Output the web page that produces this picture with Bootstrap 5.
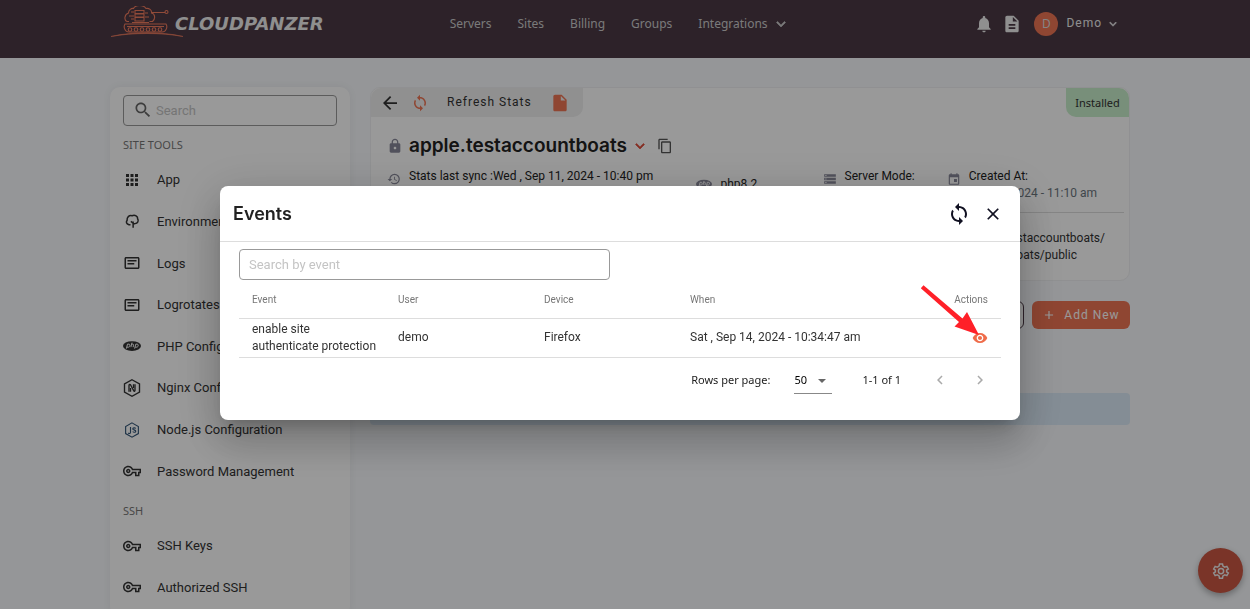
<!DOCTYPE html>
<html lang="en">
<head>
<meta charset="utf-8">
<meta name="viewport" content="width=device-width, initial-scale=1">
<title>CloudPanzer</title>
<link rel="stylesheet" href="https://cdn.jsdelivr.net/npm/bootstrap@5.3.0/dist/css/bootstrap.min.css">
<script src="https://cdn.jsdelivr.net/npm/bootstrap@5.3.0/dist/js/bootstrap.bundle.min.js"></script>
<style>
:root{--brand:#ef7554;--ink:#333;--muted:#777}
body{background:#f8fafd;color:var(--ink);font-family:"Noto Sans","Open Sans",sans-serif;font-size:12px;line-height:17px}
.ui-text,.tracked{font-family:Roboto,"Noto Sans",sans-serif}
a{color:inherit;text-decoration:none}
svg{flex:none;fill:currentColor}
.stroke-icon{fill:none;stroke:currentColor}
.i14{width:14px;height:14px}.i16{width:16px;height:16px}.i18{width:18px;height:18px}.i20{width:20px;height:20px}.i24{width:24px;height:24px}
.shell{width:100%;max-width:1030px;margin:0 auto;padding-right:10px}
.page{padding-top:25px}
.topbar{background:#4b3945;color:#eee;height:58px;padding:0 0 11px}
.wordmark{font:italic bold 18px/20px "DejaVu Sans",sans-serif;color:#eee;margin-left:-9px}
.main-nav{gap:26px;font-size:12px;color:#ccc;margin-left:126px}
.account{padding-right:10px}
.avatar{width:24px;height:24px;background:var(--brand);font-size:12px;color:#ddd}
.tracked{letter-spacing:1px}
.panel{background:#fff;border-radius:10px}
.side{width:240px;box-shadow:0 0 8px rgba(0,0,0,.06);padding:8px 13px}
.box-input{height:31px;border:1px solid #999;border-radius:4px;font:13px Roboto,"Noto Sans",sans-serif;padding:0 9px}
.box-input::placeholder{color:#c4c4c4;opacity:1}
.side .box-input{padding-left:32px}
.side-search svg{left:10px;top:5px;color:#666}
.side h2{font-size:11px;line-height:16px;color:var(--muted);margin:0;padding-top:11px;font-weight:400}
.menu{display:grid;grid-auto-rows:1fr;font-size:13px;margin:6px 0 0}
.menu a{gap:16px}
.menu svg{width:18px;height:18px}
.tools{height:333px}.ssh{height:83px}
.server{border:1px solid #f0f1f3}
.tab-bar{width:212px;height:29px;background:#f0f0f0;border-radius:10px 0 10px 0;gap:14px;padding:0 12px}
.installed{background:#c8efcb;width:63px;height:29px;border-radius:0 10px 0 10px;font-size:11px}
.site-line{padding:17px 0 2px 16px}
.site-name{font:600 19px/24px Inter,sans-serif;color:#222;margin:0 4px 0 6px}
.facts{display:grid;grid-template-columns:309fr 126fr 124fr 177fr;margin:0 5px 0 16px;border-bottom:1px solid #ddd;height:53px;color:#222}
.facts svg,.lockish{color:#889}
.paths{padding:17px 24px 16px 0}
.cta{border:0;border-radius:6px;background:var(--brand);color:#fff;height:28px;width:98px}
.ghost{border:1px solid #4b3945;border-radius:6px;background:#fff;height:28px;width:98px}
.notice{background:#dcebf8;height:32px;border-radius:4px;margin-top:64px}
.fab{width:45px;height:45px;right:7px;bottom:16px;border:0;background:#cb5743;color:#eee;box-shadow:0 3px 6px rgba(0,0,0,.3)}
.modal-backdrop.show{opacity:.4}
.modal{padding:0 10px 3px 0!important;overflow:hidden}
.modal-dialog{max-width:800px}
.modal-content{border:0;border-radius:8px;box-shadow:0 11px 15px -7px rgba(0,0,0,.2),0 24px 38px 3px rgba(0,0,0,.14),0 9px 46px 8px rgba(0,0,0,.12)}
.modal-header{padding:0 17px 0 13px;height:56px;border-color:#ddd}
.modal-title{font:600 18px/24px Inter,sans-serif;color:#222}
.plain{border:0;background:none;padding:0;color:#112;display:flex}
.modal-body{padding:7px 19px 18px}
.modal-body .box-input{width:371px}
.log{table-layout:fixed;margin:0;--bs-table-color:#333;border-color:#ddd}
.log th,.log td{padding:0 13px;vertical-align:middle}
.log th{font-weight:400;font-size:10px;height:38px;color:#777}
.log td{height:39px;line-height:17px}
.c-act{width:100px}.c-std{width:146px}
.pointer{left:-52px;top:-47px;width:64px;height:56px;color:#ff2028}
.pager{height:44px;font-size:11px;padding-right:12px;color:#222}
.rows-select{margin:0 30px 0 24px;width:38px;height:28px;border:0;border-bottom:1px solid #888;border-radius:0;padding:0;font-size:11px;appearance:none;background:url("data:image/svg+xml,%3Csvg xmlns='http://www.w3.org/2000/svg' viewBox='0 0 8 4'%3E%3Cpath fill='%23666' d='M0 0h8L4 4z'/%3E%3C/svg%3E") no-repeat 24px 13px/8px 4px}
.steps{gap:22px;margin-left:30px}
</style>
</head>
<body class="vh-100 overflow-hidden">
<svg class="d-none">
<symbol id="sync" viewBox="0 0 24 24"><path d="M12 4V1L8 5l4 4V6c3.31 0 6 2.69 6 6 0 1.01-.25 1.97-.7 2.8l1.46 1.46C19.54 15.03 20 13.57 20 12c0-4.42-3.58-8-8-8zm0 14c-3.31 0-6-2.69-6-6 0-1.01.25-1.97.7-2.8L5.24 7.74C4.46 8.97 4 10.43 4 12c0 4.42 3.58 8 8 8v3l4-4-4-4v3z"/></symbol>
<symbol id="down" viewBox="0 0 24 24"><path d="M16.59 8.59 12 13.17 7.41 8.59 6 10l6 6 6-6z" stroke="currentColor" stroke-width=".8"/></symbol>
<symbol id="key" viewBox="0 0 24 24"><path d="M22 19h-6v-4h-2.68c-1.14 2.42-3.6 4-6.32 4-3.86 0-7-3.14-7-7s3.14-7 7-7c2.72 0 5.17 1.58 6.32 4H24v6h-2v4zm-4-2h2v-4h2v-2H11.94l-.23-.67C11.01 8.34 9.11 7 7 7c-2.76 0-5 2.24-5 5s2.24 5 5 5c2.11 0 4.01-1.34 4.71-3.33l.23-.67H18v4zM7 15c-1.65 0-3-1.35-3-3s1.35-3 3-3 3 1.35 3 3-1.35 3-3 3zm0-4c-.55 0-1 .45-1 1s.45 1 1 1 1-.45 1-1-.45-1-1-1z"/></symbol>
<symbol id="logs" viewBox="0 0 24 24"><path d="M20 4H4c-1.1 0-2 .9-2 2v12c0 1.100.9 2 2 2h16c1.1 0 2-.9 2-2V6c0-1.1-.9-2-2-2zm0 14H4V6h16v12zM6 8h12v2H6zm0 4h9v2H6z"/></symbol>
<symbol id="php" viewBox="0 0 24 24"><ellipse cx="12" cy="12" rx="12" ry="6.5"/><g fill="none" stroke="#fff" stroke-width="1.3"><path d="M4.5 15.5 6 9.5h2c2 0 1.500 4-.5 4H5.300M10.500 13.500l1.500-6M11.500 9.500h1.500c1.500 0 1 1.500.5 4M15.500 15.500 17 9.500h2c2 0 1.500 4-.5 4h-2.200"/></g></symbol>
</svg>

<header class="topbar">
 <div class="shell d-flex align-items-center h-100">
  <a href="#" class="d-flex align-items-center">
   <svg class="stroke-icon" style="color:#f27d5f" width="74" height="36" viewBox="10 6 74 36" stroke-width="1.100">
    <path d="M29 21.500h-2c-3-1-3-7 1.500-8.500 0-3 3-5 5-4.500 2-4 10-4 12.500 0 3-.5 6 1.500 5.500 4.500 4 1 4 6 1 8.500h-3M52 12.500h13M25 24h41c2 3 0 8-4 8H29c-4 0-6-5-4-8zM27 26.500h37"/>
    <path d="M35 10.500h9v3h-9zM35 14h9v3h-9zM35 17.500h9V21h-9zM31 12h3M29 16h5M31 19h3M45 13h3M45 17h4M32 22.500h17"/>
    <circle cx="66.500" cy="12" r="1.500"/><circle cx="30" cy="29.500" r="1.800"/><circle cx="36" cy="29.500" r="1.800"/><circle cx="42" cy="29.500" r="1.800"/><circle cx="48" cy="29.500" r="1.800"/><circle cx="54" cy="29.500" r="1.800"/><circle cx="60" cy="29.500" r="1.800"/>
    <path d="M11 36.500C32 31.500 62 31.500 83 36.500 62 32.500 32 32.500 11 36.500z" fill="currentColor" stroke-width=".6"/>
   </svg>
   <span class="wordmark">CLOUDPANZER</span>
  </a>
  <nav class="main-nav d-flex">
   <a href="#">Servers</a><a href="#">Sites</a><a href="#">Billing</a><a href="#">Groups</a>
   <a href="#" class="d-flex align-items-center gap-1">Integrations <svg class="i18"><use href="#down"/></svg></a>
  </nav>
  <div class="account d-flex align-items-center ms-auto">
   <svg class="i20 me-2" viewBox="0 0 24 24"><path d="M12 22c1.100 0 2-.9 2-2h-4c0 1.100.89 2 2 2zm6-6v-5c0-3.070-1.640-5.640-4.500-6.320V4c0-.83-.67-1.500-1.500-1.500s-1.500.67-1.500 1.500v.68C7.630 5.360 6 7.920 6 11v5l-2 2v1h16v-1l-2-2z"/></svg>
   <svg class="i20 me-2" viewBox="0 0 24 24"><path d="M14 2H6c-1.100 0-1.990.9-1.990 2L4 20c0 1.100.89 2 1.990 2H18c1.100 0 2-.9 2-2V8l-6-6zm2 16H8v-2h8v2zm0-4H8v-2h8v2zm-3-5V3.500L18.500 9H13z"/></svg>
   <span class="avatar rounded-circle d-flex align-items-center justify-content-center me-2 ms-1">D</span>
   <span class="tracked">Demo</span><svg class="i14 ms-1"><use href="#down"/></svg>
  </div>
 </div>
</header>

<div class="shell page d-flex align-items-start">
 <aside class="panel side mt-1 flex-shrink-0">
  <div class="side-search position-relative">
   <svg class="i20 position-absolute" viewBox="0 0 24 24"><path d="M15.500 14h-.79l-.28-.27C15.410 12.590 16 11.110 16 9.500 16 5.910 13.090 3 9.500 3S3 5.910 3 9.500 5.910 16 9.500 16c1.610 0 3.090-.59 4.230-1.570l.27.28v.79l5 4.990L20.490 19l-4.990-5zm-6 0C7.010 14 5 11.990 5 9.500S7.010 5 9.500 5 14 7.010 14 9.500 11.990 14 9.500 14z"/></svg>
   <input class="box-input w-100" type="search" placeholder="Search" aria-label="Search">
  </div>
  <h2>SITE TOOLS</h2>
  <nav class="menu tools ui-text">
   <a href="#" class="d-flex align-items-center"><svg viewBox="0 0 24 24"><path d="M4 8h4V4H4v4zm6 12h4v-4h-4v4zm-6 0h4v-4H4v4zm0-6h4v-4H4v4zm6 0h4v-4h-4v4zm6-10v4h4V4h-4zm-6 4h4V4h-4v4zm6 6h4v-4h-4v4zm0 6h4v-4h-4v4z"/></svg>App</a>
   <a href="#" class="d-flex align-items-center"><svg class="stroke-icon" viewBox="0 0 24 24" stroke-width="2"><path d="M10 17H8c-4-1-4-4-2.500-6C5 7 8 4 12 5c4-2 8 1 7.500 4 2 3 0 6-3.500 6.500h-3M13.500 21v-8.500M13.500 15l-3-2.500"/></svg>Environment</a>
   <a href="#" class="d-flex align-items-center"><svg><use href="#logs"/></svg>Logs</a>
   <a href="#" class="d-flex align-items-center"><svg><use href="#logs"/></svg>Logrotates</a>
   <a href="#" class="d-flex align-items-center"><svg><use href="#php"/></svg>PHP Configuration</a>
   <a href="#" class="d-flex align-items-center"><svg class="stroke-icon" viewBox="0 0 24 24" stroke-width="1.800"><path d="M12 1l10 5.500v11L12 23 2 17.500v-11zM8 17V8.500c0-1.500 1.500-1.500 2.200-.5l4 7.500c.8 1.500 1.800 1 1.800-.5V7" /><path d="M10 17V12M14 7v5"/></svg>Nginx Configuration</a>
   <a href="#" class="d-flex align-items-center"><svg class="stroke-icon" viewBox="0 0 24 24" stroke-width="1.500" style="color:#357"><path d="M12 2.500l8.500 4.800v9.500L12 21.500l-8.500-4.700V7.300zM10 8v7c0 2-2 2-3 1M17 10c-1-1.500-4-1-4 .5s4 1.200 4 3-3 2-4 .5"/></svg>Node.js Configuration</a>
   <a href="#" class="d-flex align-items-center"><svg><use href="#key"/></svg>Password Management</a>
  </nav>
  <h2>SSH</h2>
  <nav class="menu ssh ui-text">
   <a href="#" class="d-flex align-items-center"><svg><use href="#key"/></svg>SSH Keys</a>
   <a href="#" class="d-flex align-items-center"><svg><use href="#key"/></svg>Authorized SSH</a>
  </nav>
 </aside>

 <main class="flex-fill ms-3 ps-1 mt-1">
  <section class="panel server">
   <div class="d-flex justify-content-between">
    <div class="tab-bar d-flex align-items-center">
     <svg class="i14" viewBox="4 4 16 16"><path d="M20 11H7.830l5.590-5.590L12 4l-8 8 8 8 1.410-1.410L7.830 13H20v-2z"/></svg>
     <svg class="i18" color="#ef7554"><use href="#sync"/></svg>
     <span class="tracked ms-1">Refresh Stats</span>
     <svg class="i20 ms-1" viewBox="0 0 24 24" color="#ef7554"><path d="M6 2c-1.100 0-1.990.9-1.990 2L4 20c0 1.100.89 2 1.990 2H18c1.100 0 2-.9 2-2V8l-6-6H6zm7 7V3.500L18.500 9H13z"/></svg>
    </div>
    <span class="installed d-flex align-items-center justify-content-center">Installed</span>
   </div>
   <div class="site-line d-flex align-items-center">
    <svg class="i16 lockish" viewBox="0 0 24 24"><path d="M18 8h-1V6c0-2.760-2.240-5-5-5S7 3.240 7 6v2H6c-1.100 0-2 .9-2 2v10c0 1.100.9 2 2 2h12c1.100 0 2-.9 2-2V10c0-1.100-.9-2-2-2zm-6 9c-1.100 0-2-.9-2-2s.9-2 2-2 2 .9 2 2-.9 2-2 2zm3.100-9H8.900V6c0-1.710 1.390-3.100 3.100-3.100s3.100 1.390 3.100 3.100v2z"/></svg>
    <span class="site-name">apple.testaccountboats</span>
    <svg class="i18 me-2" color="#dd4b39"><use href="#down"/></svg>
    <svg class="i16" viewBox="0 0 24 24" color="#555"><path d="M16 1H4c-1.100 0-2 .9-2 2v14h2V3h12V1zm3 4H8c-1.100 0-2 .9-2 2v14c0 1.100.9 2 2 2h11c1.100 0 2-.9 2-2V7c0-1.100-.9-2-2-2zm0 16H8V7h11v14z"/></svg>
   </div>
   <div class="facts pt-2 ui-text">
    <div class="d-flex gap-2"><svg class="i14 mt-1" viewBox="0 0 24 24"><path d="M13 3a9 9 0 0 0-9 9H1l3.890 3.890.07.14L9 12H6c0-3.870 3.130-7 7-7s7 3.130 7 7-3.130 7-7 7c-1.930 0-3.680-.79-4.940-2.060l-1.420 1.420A8.954 8.954 0 0 0 13 21a9 9 0 0 0 0-18zm-1 5v5l4.280 2.540.72-1.210-3.500-2.080V8H12z"/></svg>Stats last sync :Wed , Sep 11, 2024 - 10:40 pm</div>
    <div class="d-flex gap-2 pt-2"><svg class="i16"><use href="#php"/></svg>php8.2</div>
    <div class="d-flex gap-2"><svg class="i14 mt-1" viewBox="0 0 24 24"><path d="M2 20h20v-4H2v4zm2-3h2v2H4v-2zM2 4v4h20V4H2zm4 3H4V5h2v2zm-4 7h20v-4H2v4zm2-3h2v2H4v-2z"/></svg>Server Mode:</div>
    <div class="d-flex gap-2"><svg class="i14 mt-1" viewBox="0 0 24 24"><path d="M19 4h-1V2h-2v2H8V2H6v2H5c-1.100 0-2 .9-2 2v14c0 1.100.9 2 2 2h14c1.100 0 2-.9 2-2V6c0-1.100-.9-2-2-2zm0 16H5V9h14v11zM12 12h5v5h-5z"/></svg><div>Created At:<br><span class="text-secondary text-nowrap">Sep 11, 2024 - 11:10 am</span></div></div>
   </div>
   <div class="paths ui-text text-end"><div>/home/apple/apple.testaccountboats/</div><div class="pe-4 me-1">/apple.testaccountboats/public</div></div>
  </section>
  <div class="d-flex justify-content-end gap-2 pt-1 mt-3">
   <button class="ghost" aria-label="Events"></button>
   <button class="cta tracked d-flex align-items-center justify-content-center gap-2"><svg class="i14" viewBox="0 0 24 24"><path d="M19 13h-6v6h-2v-6H5v-2h6V5h2v6h6z"/></svg>Add New</button>
  </div>
  <div class="notice" role="status"></div>
 </main>
</div>
<button class="fab rounded-circle position-fixed d-flex align-items-center justify-content-center" aria-label="Settings">
 <svg class="stroke-icon i18" viewBox="0 0 24 24" stroke-width="2"><path d="M10 2.500h4l.6 3 2.400 1.300 2.800-1 2 3.500L19.500 11v2l2.300 1.700-2 3.500-2.800-1-2.400 1.300-.6 3h-4l-.6-3L7 17.200l-2.800 1-2-3.500L4.500 13v-2L2.200 9.300l2-3.500 2.800 1 2.400-1.300z"/><circle cx="12" cy="12" r="3.500"/></svg>
</button>

<div class="modal-backdrop show"></div>
<div class="modal d-block" role="dialog" aria-labelledby="eventsTitle">
 <div class="modal-dialog modal-dialog-centered">
  <div class="modal-content">
   <div class="modal-header">
    <h1 class="modal-title" id="eventsTitle">Events</h1>
    <div class="d-flex align-items-center gap-2">
     <button class="plain" aria-label="Refresh"><svg class="i24"><use href="#sync"/></svg></button>
     <button class="plain ms-1" aria-label="Close"><svg class="i20" viewBox="0 0 24 24"><path d="M19 6.410 17.590 5 12 10.590 6.410 5 5 6.410 10.590 12 5 17.590 6.410 19 12 13.410 17.590 19 19 17.590 13.410 12z"/></svg></button>
    </div>
   </div>
   <div class="modal-body">
    <input class="box-input d-block" type="search" placeholder="Search by event" aria-label="Search by event">
    <table class="table log ui-text">
     <thead><tr><th class="c-std">Event</th><th class="c-std">User</th><th class="c-std">Device</th><th>When</th><th class="c-act text-end">Actions</th></tr></thead>
     <tbody><tr><td class="pe-0">enable site<br>authenticate protection</td><td>demo</td><td>Firefox</td><td>Sat , Sep 14, 2024 - 10:34:47 am</td>
      <td><div class="position-relative ms-auto i16"><button class="plain" aria-label="View event"><svg class="i16" viewBox="0 0 24 24" color="#ef6c4a"><path d="M12 4.500C7 4.500 2.730 7.610 1 12c1.730 4.390 6 7.500 11 7.500s9.270-3.110 11-7.500c-1.730-4.390-6-7.500-11-7.500zM12 17c-2.760 0-5-2.240-5-5s2.240-5 5-5 5 2.240 5 5-2.240 5-5 5zm0-8c-1.660 0-3 1.340-3 3s1.340 3 3 3 3-1.340 3-3-1.340-3-3-3z"/></svg></button>
      <svg class="pointer position-absolute" viewBox="0 0 64 56"><path d="M3.500 2.200.8 5.200 39 39l-4.500 4.500L59 52 47 29l-4.500 6.500z"/></svg></div></td></tr></tbody>
    </table>
    <div class="pager d-flex align-items-center justify-content-end">
     <label for="rows">Rows per page:</label>
     <select id="rows" class="rows-select"><option>50</option></select>
     <span>1-1 of 1</span>
     <div class="steps d-flex">
      <button class="plain" disabled aria-label="Previous page"><svg class="i18" viewBox="0 0 24 24" color="#aaa"><path d="M15.410 7.410 14 6l-6 6 6 6 1.410-1.410L10.830 12z"/></svg></button>
      <button class="plain" disabled aria-label="Next page"><svg class="i18" viewBox="0 0 24 24" color="#aaa"><path d="M8.590 16.590 13.170 12 8.590 7.410 10 6l6 6-6 6z"/></svg></button>
     </div>
    </div>
   </div>
  </div>
 </div>
</div>
</body>
</html>
